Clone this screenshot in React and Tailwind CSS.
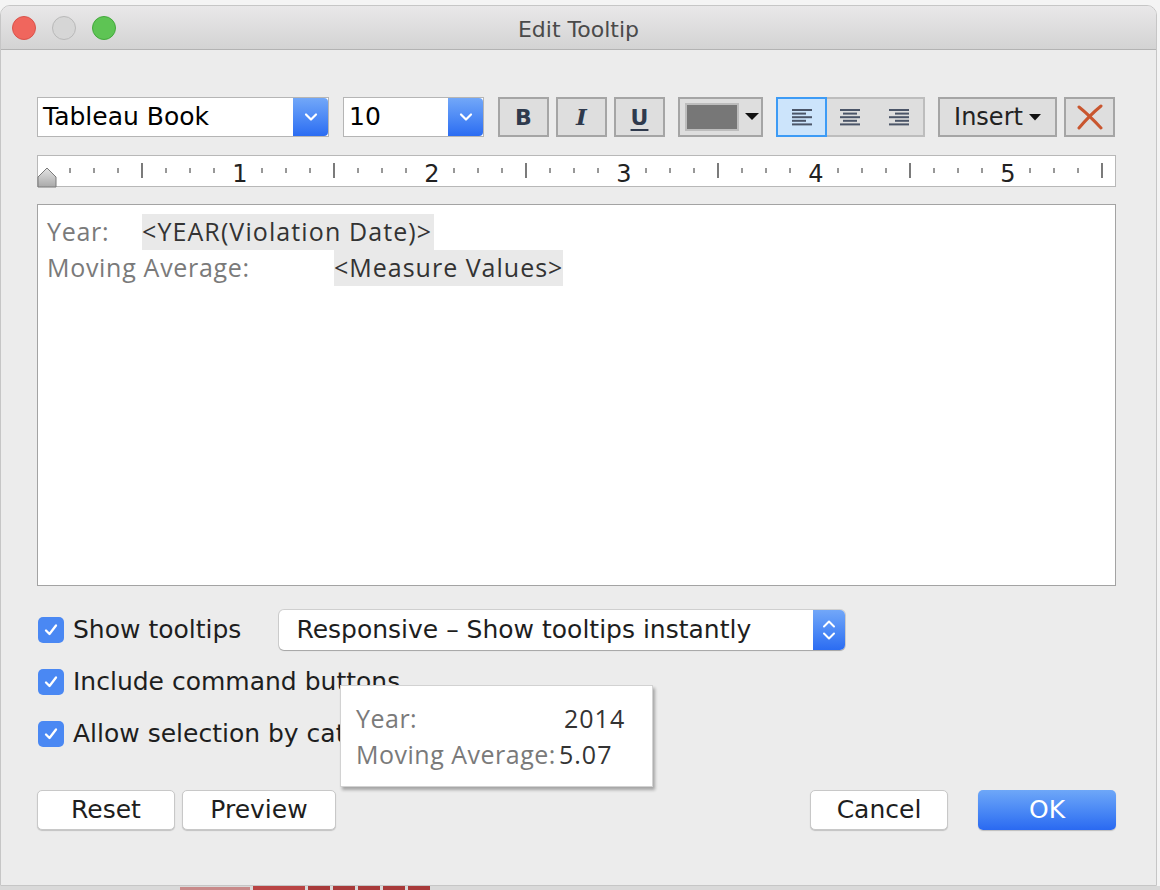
import React from "react";

const ticks = Array.from({ length: 44 }, (_, i) => i + 1);

const Ruler = () => (
  <div className="h-[32px] border border-[#b8b8b8] bg-white">
    <svg width="1076" height="30" className="overflow-visible">
      {ticks.map((i) => {
        const x = 8 + 24 * i;
        if (i % 8 === 0) {
          return (
            <text
              key={i}
              x={x + 2}
              y="18"
              textAnchor="middle"
              dominantBaseline="central"
              fontSize="24"
              fill="#222"
              fontFamily="DejaVu Sans, sans-serif"
            >
              {i / 8}
            </text>
          );
        }
        if (i % 4 === 0) {
          return <line key={i} x1={x} x2={x} y1="7" y2="22" stroke="#222" strokeWidth="1.2" />;
        }
        return <line key={i} x1={x} x2={x} y1="12" y2="17" stroke="#333" strokeWidth="1" />;
      })}
      <defs>
        <linearGradient id="mk" x1="0" y1="0" x2="0" y2="1">
          <stop offset="0" stopColor="#e4e4e4" />
          <stop offset="1" stopColor="#a9a9a9" />
        </linearGradient>
      </defs>
      <polygon points="0,31 0,21 9,12 18,21 18,31" fill="url(#mk)" stroke="#7a7a7a" strokeWidth="1" />
    </svg>
  </div>
);

const Chevron = () => (
  <svg width="14" height="10" viewBox="0 0 14 10">
    <path d="M2 2.5 L7 7.5 L12 2.5" fill="none" stroke="white" strokeWidth="2.2" strokeLinecap="round" strokeLinejoin="round" />
  </svg>
);

const Dropdown = ({ label, width }) => (
  <div className={`flex h-[40px] ${width} items-stretch border border-[#b5b5b5] bg-white`}>
    <div className="flex flex-1 items-center pl-[5px] text-[25px] text-black">{label}</div>
    <div className="flex w-[35px] items-center justify-center rounded-r-[4px] bg-gradient-to-b from-[#72a7f8] to-[#2b6cf2]">
      <Chevron />
    </div>
  </div>
);

const ToolBtn = ({ children, className = "" }) => (
  <div
    className={`flex h-[40px] w-[51px] items-center justify-center border-2 border-[#a5a5a5] bg-[#dedede] ${className}`}
  >
    {children}
  </div>
);

const AlignIcon = ({ type }) => {
  const widths = [20, 14, 20, 14, 20];
  return (
    <svg width="22" height="18" viewBox="0 0 22 18">
      {widths.map((w, i) => {
        let x = 1;
        if (type === "center") x = 1 + (20 - w) / 2;
        if (type === "right") x = 21 - w;
        return <rect key={i} x={x} y={1 + i * 3.6} width={w} height="2" fill="#4b5568" />;
      })}
    </svg>
  );
};

const Checkbox = () => (
  <div className="flex h-[26px] w-[26px] items-center justify-center rounded-[5px] bg-[#4a88f3]">
    <svg width="16" height="16" viewBox="0 0 16 16">
      <path d="M3 8.5 L6.5 12 L13 3.5" fill="none" stroke="white" strokeWidth="2.3" strokeLinecap="round" strokeLinejoin="round" />
    </svg>
  </div>
);

const CheckRow = ({ label, children }) => (
  <div className="flex h-[40px] items-center">
    <Checkbox />
    <span className="ml-[9px] text-[25px] text-[#1e1e1e]">{label}</span>
    {children}
  </div>
);

const Button = ({ children, className = "", primary = false }) => (
  <div
    className={`flex h-[40px] w-[138px] items-center justify-center rounded-[5px] text-[25px] ${
      primary
        ? "bg-gradient-to-b from-[#6ea7f8] to-[#2a69f1] text-white shadow-[0_1px_1px_rgba(0,0,0,0.2)]"
        : "border border-[#c8c8c8] bg-white text-[#1e1e1e] shadow-[0_1px_1px_rgba(0,0,0,0.18)]"
    } ${className}`}
  >
    {children}
  </div>
);

export default function App() {
  return (
    <div className="relative h-[890px] w-[1160px] overflow-hidden bg-[#f4f4f4] font-['DejaVu_Sans',sans-serif]">
      <div className="mt-[5px] flex h-[881px] w-[1157px] flex-col overflow-hidden rounded-t-[10px] border border-[#c6c6c6] bg-[#ececec]">
        {/* title bar */}
        <div className="relative flex h-[44px] shrink-0 items-center justify-center border-b border-[#b3b3b3] bg-gradient-to-b from-[#e9e8e9] to-[#d3d3d3] pt-[3px]">
          <div className="absolute left-[11px] top-[10px] flex gap-[16px]">
            <div className="h-[24px] w-[24px] rounded-full border border-[#d9534b] bg-[#f0665d]" />
            <div className="h-[24px] w-[24px] rounded-full border border-[#b9b9b9] bg-[#d6d6d6]" />
            <div className="h-[24px] w-[24px] rounded-full border border-[#43a93c] bg-[#5ec454]" />
          </div>
          <span className="text-[22px] text-[#4a4a4a]">Edit Tooltip</span>
        </div>

        {/* body */}
        <div className="relative flex flex-1 flex-col pl-[36px] pr-[40px] pt-[47px]">
          {/* toolbar */}
          <div className="flex items-center">
            <Dropdown label="Tableau Book" width="w-[292px]" />
            <div className="ml-[14px]">
              <Dropdown label="10" width="w-[141px]" />
            </div>
            <ToolBtn className="ml-[14px]">
              <span className="text-[22px] font-bold text-[#2f3a4d]">B</span>
            </ToolBtn>
            <ToolBtn className="ml-[7px]">
              <span className="font-['DejaVu_Serif',serif] text-[23px] font-bold italic text-[#2f3a4d]">I</span>
            </ToolBtn>
            <ToolBtn className="ml-[7px]">
              <span className="text-[22px] font-bold text-[#2f3a4d] underline decoration-[2px] underline-offset-[4px]">U</span>
            </ToolBtn>
            <div className="ml-[13px] flex h-[40px] w-[85px] items-center border-2 border-[#a5a5a5] bg-[#dedede] pl-[5px]">
              <div className="h-[28px] w-[54px] border-2 border-[#bdbdbd] bg-[#777777]" />
              <svg width="14" height="8" viewBox="0 0 14 8" className="ml-[6px]">
                <polygon points="0,0 14,0 7,7" fill="#111" />
              </svg>
            </div>
            <div className="ml-[13px] flex h-[40px] w-[149px] border-2 border-[#bdbdbd] bg-[#dedede]">
              <div className="-m-[2px] flex h-[40px] w-[51px] items-center justify-center border-2 border-[#3d9bf5] bg-[#cce4fb]">
                <AlignIcon type="left" />
              </div>
              <div className="flex flex-1 items-center justify-center">
                <AlignIcon type="center" />
              </div>
              <div className="flex flex-1 items-center justify-center">
                <AlignIcon type="right" />
              </div>
            </div>
            <div className="ml-[13px] flex h-[40px] w-[119px] items-center justify-center gap-[6px] border-2 border-[#a5a5a5] bg-[#dedede]">
              <span className="text-[24px] text-[#222]">Insert</span>
              <svg width="12" height="7" viewBox="0 0 12 7">
                <polygon points="0,0 12,0 6,6.5" fill="#111" />
              </svg>
            </div>
            <ToolBtn className="ml-[7px]">
              <svg width="28" height="26" viewBox="0 0 28 26">
                <path d="M3 3 Q13 11 25 24" fill="none" stroke="#c9562f" strokeWidth="3" strokeLinecap="round" />
                <path d="M25 2 Q14 11 3 24" fill="none" stroke="#c9562f" strokeWidth="3" strokeLinecap="round" />
              </svg>
            </ToolBtn>
          </div>

          {/* ruler */}
          <div className="mt-[18px]">
            <Ruler />
          </div>

          {/* editor */}
          <div className="mt-[17px] h-[382px] border border-[#a3a3a3] bg-white pl-[9px] pt-[9px] font-['Open_Sans',sans-serif] text-[25px] tracking-[0.7px]">
            <div className="flex h-[36px] items-center whitespace-nowrap">
              <span className="w-[95px] shrink-0 text-[#7a7a7a]">Year:</span>
              <span className="flex h-[36px] items-center bg-[#e9e9e9] pr-[2px] tracking-[1.1px] text-[#333]">&lt;YEAR(Violation Date)&gt;</span>
            </div>
            <div className="flex h-[36px] items-center whitespace-nowrap">
              <span className="w-[287px] shrink-0 text-[#7a7a7a]">Moving Average:</span>
              <span className="flex h-[36px] items-center bg-[#e9e9e9] tracking-[1px] text-[#333]">&lt;Measure Values&gt;</span>
            </div>
          </div>

          {/* options */}
          <div className="mt-[24px] flex flex-col gap-[12px] pl-[1px]">
            <CheckRow label="Show tooltips">
              <div className="ml-[38px] flex h-[40px] w-[566px] items-stretch rounded-[5px] bg-white shadow-[0_0_0_1px_rgba(0,0,0,0.12),0_1px_1px_rgba(0,0,0,0.2)]">
                <div className="flex flex-1 items-center pl-[17px] text-[25px] text-[#1e1e1e]">
                  Responsive – Show tooltips instantly
                </div>
                <div className="flex w-[32px] flex-col items-center justify-center gap-[4px] rounded-r-[5px] bg-gradient-to-b from-[#72a7f8] to-[#2b6cf2]">
                  <svg width="14" height="8" viewBox="0 0 14 8">
                    <path d="M2 6.5 L7 1.5 L12 6.5" fill="none" stroke="white" strokeWidth="2" strokeLinecap="round" strokeLinejoin="round" />
                  </svg>
                  <svg width="14" height="8" viewBox="0 0 14 8">
                    <path d="M2 1.5 L7 6.5 L12 1.5" fill="none" stroke="white" strokeWidth="2" strokeLinecap="round" strokeLinejoin="round" />
                  </svg>
                </div>
              </div>
            </CheckRow>
            <CheckRow label="Include command buttons" />
            <CheckRow label="Allow selection by category" />
          </div>

          {/* buttons */}
          <div className="mt-[36px] flex">
            <Button>Reset</Button>
            <Button className="ml-[7px] w-[154px]">Preview</Button>
            <Button className="ml-auto">Cancel</Button>
            <Button primary className="ml-[30px]">OK</Button>
          </div>

          {/* hover tooltip preview */}
          <div className="absolute left-[339px] top-[635px] h-[102px] w-[313px] border border-[#d2d2d2] bg-white pl-[15px] pt-[15px] font-['Open_Sans',sans-serif] text-[25px] tracking-[0.5px] shadow-[2px_3px_3px_rgba(0,0,0,0.3)]">
            <div className="flex h-[36px] items-center whitespace-nowrap">
              <span className="w-[208px] shrink-0 text-[#7a7a7a]">Year:</span>
              <span className="tracking-[1px] text-[#333]">2014</span>
            </div>
            <div className="flex h-[36px] items-center whitespace-nowrap">
              <span className="w-[203px] shrink-0 text-[#7a7a7a]">Moving Average:</span>
              <span className="tracking-[1px] text-[#333]">5.07</span>
            </div>
          </div>
        </div>
      </div>

      {/* the chart behind the dialog */}
      <div className="flex h-[4px] items-end gap-[3px] bg-[#d9d9d9] pl-[180px]">
        <div className="h-[3px] w-[70px] bg-[#c88a8a]" />
        <div className="h-[4px] w-[52px] bg-[#b94444]" />
        <div className="h-[4px] w-[22px] bg-[#a83a3a]" />
        <div className="h-[4px] w-[22px] bg-[#a83a3a]" />
        <div className="h-[4px] w-[22px] bg-[#a83a3a]" />
        <div className="h-[4px] w-[22px] bg-[#a83a3a]" />
        <div className="h-[4px] w-[22px] bg-[#a83a3a]" />
      </div>
    </div>
  );
}
